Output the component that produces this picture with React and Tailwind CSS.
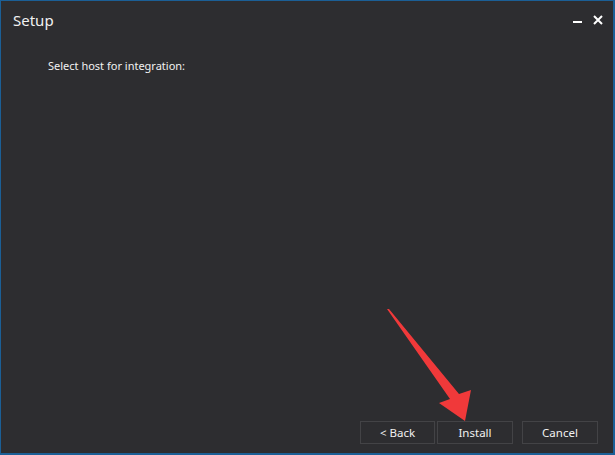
export default function App() {
  return (
    <div className="relative w-[615px] h-[455px] bg-[#2d2d30] border-l border-t border-r-2 border-b-2 border-[#1b5f96] flex flex-col text-[#f1f1f1]" style={{ fontFamily: '"Noto Sans", "Open Sans", sans-serif' }}>
      <div className="flex items-center justify-between h-[38px] pl-[12px] pr-[10px]">
        <span className="text-[15px] leading-none text-[#f1f1f1]">Setup</span>
        <div className="flex items-center gap-[10px]">
          <svg width="10" height="10" viewBox="0 0 10 10"><rect x="0" y="6" width="9" height="2" fill="#fff" /></svg>
          <svg width="10" height="10" viewBox="0 0 10 10"><path d="M1 1 L9 9 M9 1 L1 9" stroke="#fff" strokeWidth="2" /></svg>
        </div>
      </div>
      <div className="pl-[47px] pt-[21px] text-[11px] leading-none">Select host for integration:</div>
      <div className="flex-1" />
      <div className="flex items-center pl-[359px] pb-[9px]">
        <button className="w-[75px] h-[23px] border border-[#434346] text-[11.5px] leading-none text-[#f1f1f1]">&lt; Back</button>
        <button className="ml-[2px] w-[76px] h-[23px] border border-[#434346] text-[11.5px] leading-none text-[#f1f1f1]">Install</button>
        <button className="ml-[9px] w-[76px] h-[23px] border border-[#434346] text-[11.5px] leading-none text-[#f1f1f1]">Cancel</button>
      </div>
      <svg className="absolute left-0 top-0 pointer-events-none" width="615" height="455" viewBox="0 0 615 455">
        <polygon points="386,308 388,308 458,393 470,389 464,420 438,402 449,398" fill="#f0393a" />
      </svg>
    </div>
  );
}
